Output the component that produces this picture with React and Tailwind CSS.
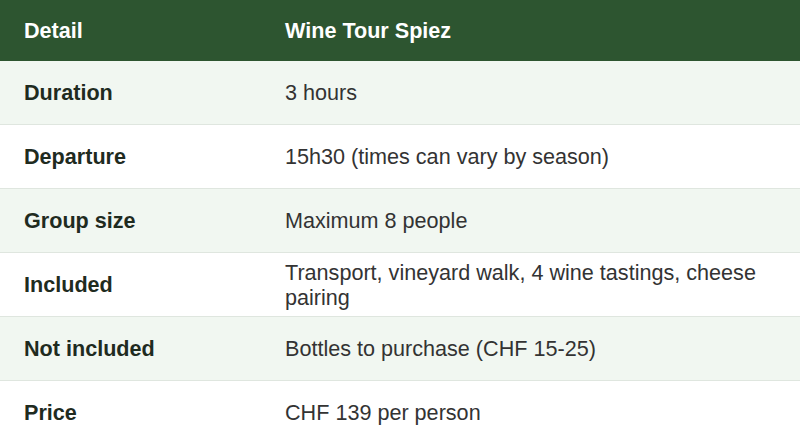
export default function App() {
  const rows = [
    ["Duration", "3 hours"],
    ["Departure", "15h30 (times can vary by season)"],
    ["Group size", "Maximum 8 people"],
    ["Included", "Transport, vineyard walk, 4 wine tastings, cheese pairing"],
    ["Not included", "Bottles to purchase (CHF 15-25)"],
    ["Price", "CHF 139 per person"],
  ];
  return (
    <div className="w-[800px] h-[444px] overflow-hidden bg-white font-['Liberation_Sans',Arial,sans-serif]">
      <div className="flex h-[61px] items-center bg-[#2d5530] text-white font-bold text-[21.6px] leading-[25px]">
        <div className="w-[285px] pl-[24px]">Detail</div>
        <div className="flex-1">Wine Tour Spiez</div>
      </div>
      {rows.map(([k, v], i) => (
        <div
          key={k}
          className={
            i % 2 === 0
              ? "flex h-[64px] items-center border-b border-[#dfe6df] bg-[#f1f7f1] text-[21.6px] leading-[25px]"
              : "flex h-[64px] items-center border-b border-[#dfe6df] bg-white text-[21.6px] leading-[25px]"
          }
        >
          <div className="w-[285px] pl-[24px] font-bold text-[#1f2b1f]">{k}</div>
          <div className="flex-1 pr-[30px] text-[#333333]">{v}</div>
        </div>
      ))}
    </div>
  );
}
